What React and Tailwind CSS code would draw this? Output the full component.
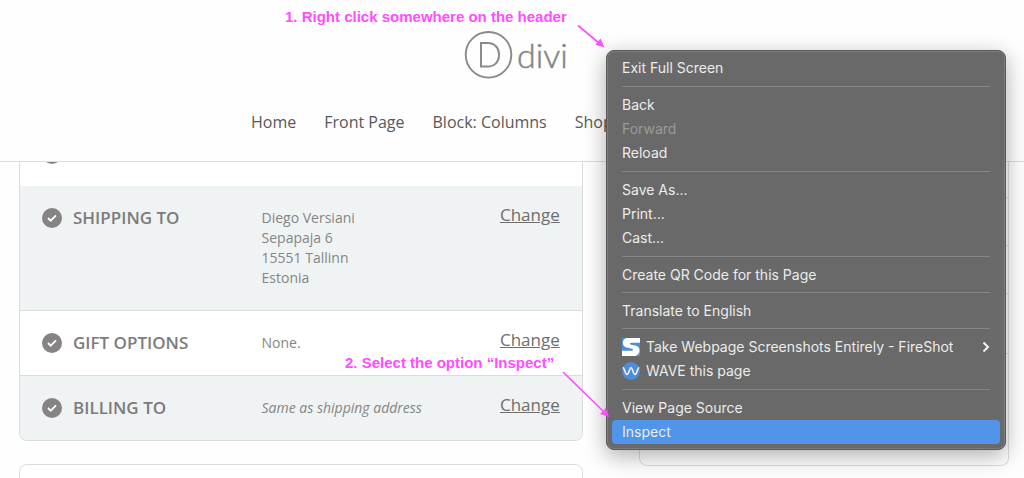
import React from "react";

const OPEN_SANS = "font-['Open_Sans','Noto_Sans',sans-serif]";

function DiviLogo() {
  return (
    <a href="#home" aria-label="Divi home" className="block">
      <svg width="104" height="50" viewBox="0 0 104 50" fill="none" stroke="#8a8a8a">
        <circle cx="24.5" cy="24.8" r="22.8" strokeWidth="1.900" />
        <path d="M17 13.100h6.500c7 0 11.500 4.500 11.500 11.700s-4.500 11.700-11.500 11.700H17z" strokeWidth="2" />
        <text
          x="53"
          y="38"
          fontFamily="Lato, sans-serif"
          fontWeight="300"
          fontSize="34"
          fill="#858585"
          stroke="#858585"
          strokeWidth="0.5"
        >
          divi
        </text>
      </svg>
    </a>
  );
}

function CheckBadge() {
  return (
    <svg width="20" height="20" viewBox="0 0 20 20" className="shrink-0" aria-hidden="true">
      <circle cx="10" cy="10" r="10" fill="#858383" />
      <path d="M6 10l2.700 2.700L14 7.400" fill="none" stroke="#fff" strokeWidth="1.8" />
    </svg>
  );
}

function OrderRow({ title, children, shaded, last }) {
  return (
    <section
      className={`grid grid-cols-[221fr_240fr_58fr] items-start py-5 pr-[22px] pl-[22px] ${
        shaded ? "bg-[#eff3f4]" : "bg-white"
      } ${last ? "" : "border-b border-[#d9dcdc]"}`}
    >
      <div className="flex h-6 items-center gap-[11px]">
        <CheckBadge />
        <h2 className="text-[17px] leading-6 font-semibold text-[#7d7b7b]">{title}</h2>
      </div>
      <div className="pt-0.5 text-sm leading-5 text-[#858585]">{children}</div>
      <a href="#change" className="-mt-[3px] justify-self-end text-[17px] leading-6 text-[#6e6e6e] underline">
        Change
      </a>
    </section>
  );
}

function FireShotIcon() {
  return (
    <svg width="18" height="18" viewBox="0 0 18 18" className="shrink-0" aria-hidden="true">
      <rect width="18" height="18" fill="#fff" />
      <path d="M0 0h4.500C2.300.8.8 2.300.8 4.800c0 3 2 4.400 5 5l4 .9c1.800.4 1.800 2.100-.5 2.100H0z" fill="#4f8fd6" />
      <path d="M18 4.800H9.500c-2 0-2.200 1.500-.4 1.900l4 .9c3 .7 4.400 2.200 4.400 4.700 0 2.700-1.500 4.700-4 5.700H18z" fill="#4f8fd6" />
    </svg>
  );
}

function WaveIcon() {
  return (
    <svg width="18" height="18" viewBox="0 0 18 18" className="shrink-0" aria-hidden="true">
      <circle cx="9" cy="9" r="9" fill="#4f8ed6" />
      <path
        d="M.8 5.500C2.500 5.500 3 12.500 5 12.500S7.500 5.500 9 5.500s2 7 4 7 2.500-7 4.200-7"
        fill="none"
        stroke="#f2f2f2"
        strokeWidth="1.600"
      />
    </svg>
  );
}

function MenuItem({ icon, label, disabled, active, submenu }) {
  const tone = disabled ? "text-[#9a9a9a]" : "text-[#ececec]";
  return (
    <button
      type="button"
      role="menuitem"
      disabled={disabled}
      className={`flex h-6 w-full items-center gap-1.5 px-2.5 text-left text-sm ${tone} ${
        active ? "rounded bg-[#5095e9]" : ""
      }`}
    >
      {icon}
      <span className="whitespace-nowrap">{label}</span>
      {submenu && (
        <svg width="8" height="12" viewBox="0 0 8 12" className="ml-auto" aria-hidden="true">
          <path d="M1.500 1.500L6 6l-4.500 4.500" fill="none" stroke="#f2f2f2" strokeWidth="2" />
        </svg>
      )}
    </button>
  );
}

function Separator({ tight }) {
  return <div role="separator" className={`mx-2.5 h-px bg-[#868686] ${tight ? "mt-[5px] mb-1.5" : "my-1.5"}`} />;
}

function ContextMenu() {
  return (
    <div
      role="menu"
      className="absolute top-[50px] left-[606px] z-20 w-[400px] rounded-lg border border-[#5a5a5a] bg-[#696969] p-[5px] font-['Inter',sans-serif] shadow-[0_6px_22px_rgba(0,0,0,0.32),inset_0_0_0_1px_#7c7c7c]"
    >
      <MenuItem label="Exit Full Screen" />
      <Separator />
      <MenuItem label="Back" />
      <MenuItem label="Forward" disabled />
      <MenuItem label="Reload" />
      <Separator />
      <MenuItem label="Save As..." />
      <MenuItem label="Print..." />
      <MenuItem label="Cast..." />
      <Separator />
      <MenuItem label="Create QR Code for this Page" />
      <Separator tight />
      <MenuItem label="Translate to English" />
      <Separator tight />
      <MenuItem icon={<FireShotIcon />} label="Take Webpage Screenshots Entirely - FireShot" submenu />
      <MenuItem icon={<WaveIcon />} label="WAVE this page" />
      <Separator />
      <MenuItem label="View Page Source" />
      <MenuItem label="Inspect" active />
    </div>
  );
}

function Annotations() {
  const note = "absolute z-30 whitespace-nowrap font-['Liberation_Sans',sans-serif] text-[15px] leading-5 font-bold text-[#ff4dff]";
  return (
    <>
      <p className={`${note} top-[7px] left-[285px]`}>1. Right click somewhere on the header</p>
      <p className={`${note} top-[353px] left-[345px]`}>2. Select the option “Inspect”</p>
      <svg width="28" height="26" viewBox="0 0 28 26" className="absolute top-[23px] left-[577px] z-30" aria-hidden="true">
        <path d="M1 2.500L22 20" stroke="#ff4dff" strokeWidth="1.700" />
        <path d="M27.500 24.500l-9.200-2.800 5.200-6.200z" fill="#ff4dff" />
      </svg>
      <svg width="48" height="48" viewBox="0 0 48 48" className="absolute top-[370px] left-[562px] z-30" aria-hidden="true">
        <path d="M1 2L41 41" stroke="#ff4dff" strokeWidth="1.700" />
        <path d="M47 47l-9-3 5.800-6z" fill="#ff4dff" />
      </svg>
    </>
  );
}

export default function App() {
  return (
    <div className={`relative h-screen overflow-hidden bg-[#fefefe] ${OPEN_SANS}`}>
      <header className="relative z-10 border-b border-[#dcdcdc] bg-[#fefefe] pt-[30px] pb-[27px]">
        <div className="flex justify-center pl-2">
          <DiviLogo />
        </div>
        <nav className="mt-[30px] flex gap-7 pl-[251px] text-base leading-6 font-medium text-[#585858]">
          <a href="#home">Home</a>
          <a href="#front-page">Front Page</a>
          <a href="#columns">Block: Columns</a>
          <a href="#shop">Shop</a>
        </nav>
      </header>

      <main className="-mt-10 grid grid-cols-[565fr_371fr] items-start gap-14 pr-[15px] pl-[19px]">
        <div>
          <div className="overflow-hidden rounded-b-lg border border-t-0 border-[#d9dcdc]">
            <section className="grid grid-cols-[1fr_auto] items-start bg-white px-[22px] pt-[22px] pb-[22px]">
              <CheckBadge />
              <a href="#change" className="-mt-1 text-[17px] leading-6 text-[#6e6e6e] underline">
                Change
              </a>
            </section>
            <OrderRow title="SHIPPING TO" shaded>
              Diego Versiani
              <br />
              Sepapaja 6
              <br />
              15551 Tallinn
              <br />
              Estonia
              <div className="h-0.5" />
            </OrderRow>
            <OrderRow title="GIFT OPTIONS">None.</OrderRow>
            <OrderRow title="BILLING TO" shaded last>
              <em>Same as shipping address</em>
            </OrderRow>
          </div>
          <div className="mt-[23px] h-24 rounded-lg border border-[#d9dcdc] bg-white" />
        </div>
        <aside className="overflow-hidden rounded-b-lg border border-t-0 border-[#dedede] bg-white">
          <div className="h-[76px] border-b border-[#dedede]" />
          <div className="h-12 border-b border-[#dedede]" />
          <div className="h-12 border-b border-[#dedede]" />
          <div className="h-[60px] border-b border-[#dedede]" />
          <div className="h-[111px]" />
        </aside>
      </main>

      <ContextMenu />
      <Annotations />
    </div>
  );
}
